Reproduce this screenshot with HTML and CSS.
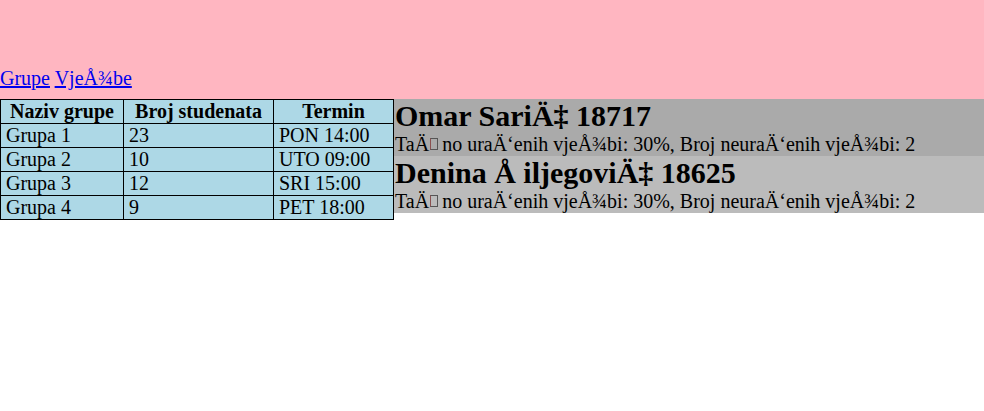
FILE: index.html
```html
<!DOCTYPE html>
<html>
<head>
<meta charset="utf-8">
<link rel="stylesheet" href="styles.css">
</head>
<body>
<header class="top">
<nav class="nav"><a href="#">Grupe</a> <a href="#">VjeÅ¾be</a></nav>
</header>
<main class="main">
<table class="groups">
<thead>
<tr><th class="col-name">Naziv grupe</th><th class="col-count">Broj studenata</th><th>Termin</th></tr>
</thead>
<tbody>
<tr><td>Grupa 1</td><td>23</td><td>PON 14:00</td></tr>
<tr><td>Grupa 2</td><td>10</td><td>UTO 09:00</td></tr>
<tr><td>Grupa 3</td><td>12</td><td>SRI 15:00</td></tr>
<tr><td>Grupa 4</td><td>9</td><td>PET 18:00</td></tr>
</tbody>
</table>
<section class="students">
<div class="student odd">
<h2 class="name">Omar SariÄ‡ 18717</h2>
<p class="stats">TaÄ<span class="tofu">&#x8D;</span>no uraÄ‘enih vjeÅ¾bi: 30%, Broj neuraÄ‘enih vjeÅ¾bi: 2</p>
</div>
<div class="student even">
<h2 class="name">Denina Å&nbsp;iljegoviÄ‡ 18625</h2>
<p class="stats">TaÄ<span class="tofu">&#x8D;</span>no uraÄ‘enih vjeÅ¾bi: 30%, Broj neuraÄ‘enih vjeÅ¾bi: 2</p>
</div>
</section>
</main>
</body>
</html>
```
FILE: styles.css
```css
body {
  margin: 0;
  font-family: "Liberation Serif", "Times New Roman", serif;
}
.top {
  background: #ffb6c1;
  height: 99px;
  display: flex;
  align-items: flex-end;
}
.nav {
  font-size: 20px;
  padding-bottom: 9px;
}
.nav a {
  color: #0000ee;
}
.main {
  display: flex;
  align-items: flex-start;
}
.groups {
  width: 394px;
  flex: none;
  border-collapse: collapse;
  background: #add8e6;
  font-size: 20px;
}
.groups th, .groups td {
  border: 1px solid #000;
  padding: 0 5px;
}
.col-name { width: 112px; }
.col-count { width: 139px; }
.groups td {
  text-align: left;
}
.students {
  flex: 1;
}
.student {
  padding: 0 1px;
}
.odd { background: #aaaaaa; }
.even { background: #bbbbbb; }
.name {
  margin: 0;
  font-size: 30px;
}
.stats {
  margin: 0;
  font-size: 20px;
}
.tofu {
  position: relative;
  color: transparent;
  line-height: 0;
  letter-spacing: -3px;
}
.tofu::before {
  content: "";
  position: absolute;
  left: 1px;
  bottom: 5px;
  width: 8px;
  height: 12px;
  border: 1px solid #555;
  border-left-color: #8a5050;
  box-sizing: border-box;
}
```
